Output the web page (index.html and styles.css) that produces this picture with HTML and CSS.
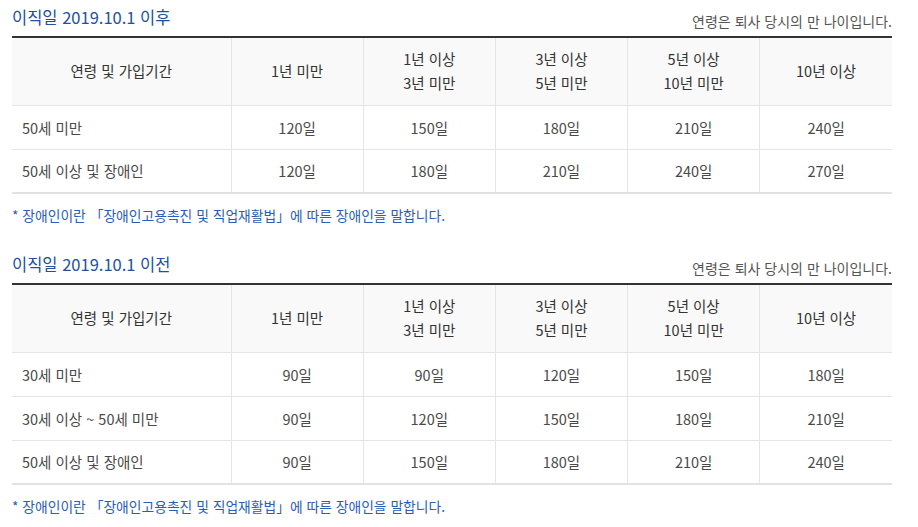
FILE: index.html
```html
<!DOCTYPE html>
<html lang="ko">
<head>
<meta charset="utf-8">
<link rel="stylesheet" href="styles.css">
</head>
<body>
<div class="page">
  <section class="block">
    <div class="block-head">
      <h2 class="block-title">이직일 2019.10.1 이후</h2>
      <p class="block-sub">연령은 퇴사 당시의 만 나이입니다.</p>
    </div>
    <table class="tbl">
      <colgroup><col class="c-first"><col><col><col><col><col></colgroup>
      <thead>
        <tr>
          <th>연령 및 가입기간</th>
          <th>1년 미만</th>
          <th>1년 이상<br>3년 미만</th>
          <th>3년 이상<br>5년 미만</th>
          <th>5년 이상<br>10년 미만</th>
          <th>10년 이상</th>
        </tr>
      </thead>
      <tbody>
        <tr><td class="lbl">50세 미만</td><td>120일</td><td>150일</td><td>180일</td><td>210일</td><td>240일</td></tr>
        <tr><td class="lbl">50세 이상 및 장애인</td><td>120일</td><td>180일</td><td>210일</td><td>240일</td><td>270일</td></tr>
      </tbody>
    </table>
    <p class="note">* 장애인이란 「장애인고용촉진 및 직업재활법」에 따른 장애인을 말합니다.</p>
  </section>

  <section class="block block-second">
    <div class="block-head">
      <h2 class="block-title">이직일 2019.10.1 이전</h2>
      <p class="block-sub">연령은 퇴사 당시의 만 나이입니다.</p>
    </div>
    <table class="tbl">
      <colgroup><col class="c-first"><col><col><col><col><col></colgroup>
      <thead>
        <tr>
          <th>연령 및 가입기간</th>
          <th>1년 미만</th>
          <th>1년 이상<br>3년 미만</th>
          <th>3년 이상<br>5년 미만</th>
          <th>5년 이상<br>10년 미만</th>
          <th>10년 이상</th>
        </tr>
      </thead>
      <tbody>
        <tr><td class="lbl">30세 미만</td><td>90일</td><td>90일</td><td>120일</td><td>150일</td><td>180일</td></tr>
        <tr><td class="lbl">30세 이상 ~ 50세 미만</td><td>90일</td><td>120일</td><td>150일</td><td>180일</td><td>210일</td></tr>
        <tr><td class="lbl">50세 이상 및 장애인</td><td>90일</td><td>150일</td><td>180일</td><td>210일</td><td>240일</td></tr>
      </tbody>
    </table>
    <p class="note">* 장애인이란 「장애인고용촉진 및 직업재활법」에 따른 장애인을 말합니다.</p>
  </section>
</div>
</body>
</html>
```

FILE: styles.css
```css
* { box-sizing: border-box; }
html, body { margin: 0; padding: 0; background: #fff; }
body {
  font-family: "Noto Sans CJK KR", "Noto Sans", sans-serif;
  color: #444;
}
.page {
  width: 880px;
  margin-left: 12px;
}
.block-second { margin-top: 22px; }
.block-head {
  display: flex;
  justify-content: space-between;
  align-items: flex-end;
  height: 36px;
  padding-bottom: 6px;
}
.block-title {
  margin: 0;
  font-size: 16.5px;
  font-weight: 400;
  line-height: 22px;
  color: #22509e;
  align-self: flex-start;
  padding-top: 6px;
}
.block-sub {
  margin: 0;
  font-size: 14px;
  line-height: 18px;
  color: #555;
}
.tbl {
  width: 880px;
  border-collapse: collapse;
  table-layout: fixed;
  border-top: 2px solid #333;
  border-bottom: 2px solid #e2e2e2;
  font-size: 14.5px;
}
.c-first { width: 219px; }
.tbl th {
  height: 68px;
  background: #f9f9f9;
  font-weight: 400;
  color: #333;
  line-height: 24px;
  text-align: center;
  border-left: 1px solid #e5e5e5;
  border-bottom: 1px solid #e5e5e5;
  padding: 0;
}
.tbl th:first-child, .tbl td:first-child { border-left: 0; }
.tbl td {
  height: 44px;
  text-align: center;
  color: #4a4a4a;
  border-left: 1px solid #e5e5e5;
  border-bottom: 1px solid #e5e5e5;
  padding: 0;
}
.tbl td.lbl {
  text-align: left;
  padding-left: 10px;
}
.note {
  margin: 11px 0 0;
  font-size: 13.8px;
  line-height: 20px;
  color: #2a5db5;
}
```
